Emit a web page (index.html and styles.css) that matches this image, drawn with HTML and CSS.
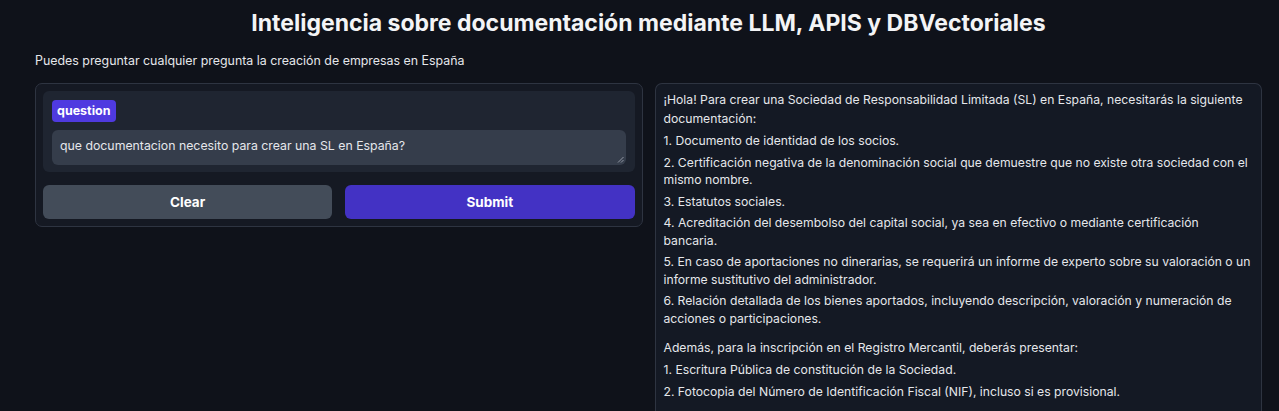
FILE: index.html
```html
<!DOCTYPE html>
<html lang="es">
<head>
<meta charset="utf-8">
<title>Inteligencia sobre documentación</title>
<link rel="stylesheet" href="styles.css">
</head>
<body>
<div class="app">
  <h1 class="title">Inteligencia sobre documentación mediante LLM, APIS y DBVectoriales</h1>
  <p class="subtitle">Puedes preguntar cualquier pregunta la creación de empresas en España</p>
  <div class="row">
    <div class="panel left">
      <div class="field">
        <span class="badge">question</span>
        <div class="textarea">que documentacion necesito para crear una SL en España?<svg class="grip" width="7" height="7" viewBox="0 0 7 7"><path d="M6.5 1 L1 6.5 M6.5 4 L4 6.5" stroke="#9ca3af" stroke-width="0.9" fill="none"/></svg></div>
      </div>
      <div class="buttons">
        <button class="btn secondary">Clear</button>
        <button class="btn primary">Submit</button>
      </div>
    </div>
    <div class="panel right">
      <p>¡Hola! Para crear una Sociedad de Responsabilidad Limitada (SL) en España, necesitarás la siguiente<br>documentación:</p>
      <p>1. Documento de identidad de los socios.</p>
      <p>2. Certificación negativa de la denominación social que demuestre que no existe otra sociedad con el<br>mismo nombre.</p>
      <p>3. Estatutos sociales.</p>
      <p>4. Acreditación del desembolso del capital social, ya sea en efectivo o mediante certificación<br>bancaria.</p>
      <p>5. En caso de aportaciones no dinerarias, se requerirá un informe de experto sobre su valoración o un<br>informe sustitutivo del administrador.</p>
      <p>6. Relación detallada de los bienes aportados, incluyendo descripción, valoración y numeración de<br>acciones o participaciones.</p>
      <p class="gap">Además, para la inscripción en el Registro Mercantil, deberás presentar:</p>
      <p class="late">1. Escritura Pública de constitución de la Sociedad.</p>
      <p class="late">2. Fotocopia del Número de Identificación Fiscal (NIF), incluso si es provisional.</p>
    </div>
  </div>
</div>
</body>
</html>
```

FILE: styles.css
```css
html, body {
  margin: 0;
  padding: 0;
  background: #0f121a;
  color: #e5e7eb;
  font-family: Inter, "Open Sans", sans-serif;
  overflow: hidden;
  height: 411px;
}
.app {
  padding: 0 17px 0 35px;
}
.title {
  margin: 0;
  padding-top: 8px;
  text-align: center;
  font-size: 23px;
  font-weight: 700;
  line-height: 30px;
  color: #f3f4f6;
}
.subtitle {
  margin: 15px 0 0 0;
  font-size: 12.4px;
  line-height: 16px;
  color: #e5e7eb;
}
.row {
  display: flex;
  gap: 12px;
  margin-top: 14px;
  align-items: flex-start;
}
.panel {
  flex: 1 1 0;
  border: 1px solid #2e3441;
  border-radius: 7px;
  box-sizing: border-box;
}
.left {
  background: #151923;
  padding: 7px;
}
.field {
  background: #1f2531;
  border-radius: 6px;
  padding: 8px 9px 7px 9px;
}
.badge {
  display: inline-block;
  background: #4f3ae0;
  color: #ffffff;
  font-weight: 700;
  font-size: 12.5px;
  line-height: 22px;
  padding: 0 5px;
  border-radius: 4px;
}
.textarea {
  position: relative;
  margin-top: 8px;
  background: #353d4b;
  border-radius: 6px;
  height: 35px;
  box-sizing: border-box;
  padding: 7px 8px;
  font-size: 12.3px;
  line-height: 18px;
  color: #e5e7eb;
}
.grip {
  position: absolute;
  right: 2px;
  bottom: 2px;
}
.buttons {
  display: flex;
  gap: 13px;
  margin-top: 13px;
}
.btn {
  flex: 1 1 0;
  height: 34px;
  border: none;
  border-radius: 6px;
  font-family: inherit;
  font-weight: 700;
  font-size: 13.5px;
  color: #ffffff;
}
.secondary { background: #434c59; }
.primary { background: #4332c4; }
.right {
  background: #141924;
  padding: 6px 6px 8px 8px;
  min-height: 340px;
  border-bottom: none;
  border-bottom-left-radius: 0;
  border-bottom-right-radius: 0;
}
.right p {
  margin: 0 0 4px 0;
  font-size: 12.2px;
  line-height: 17.5px;
  color: #e5e7eb;
}
.right p:first-child {
  line-height: 19px;
}
.right p.gap {
  margin-top: 12px;
}
.right p.late {
  margin-bottom: 5px;
}
```
